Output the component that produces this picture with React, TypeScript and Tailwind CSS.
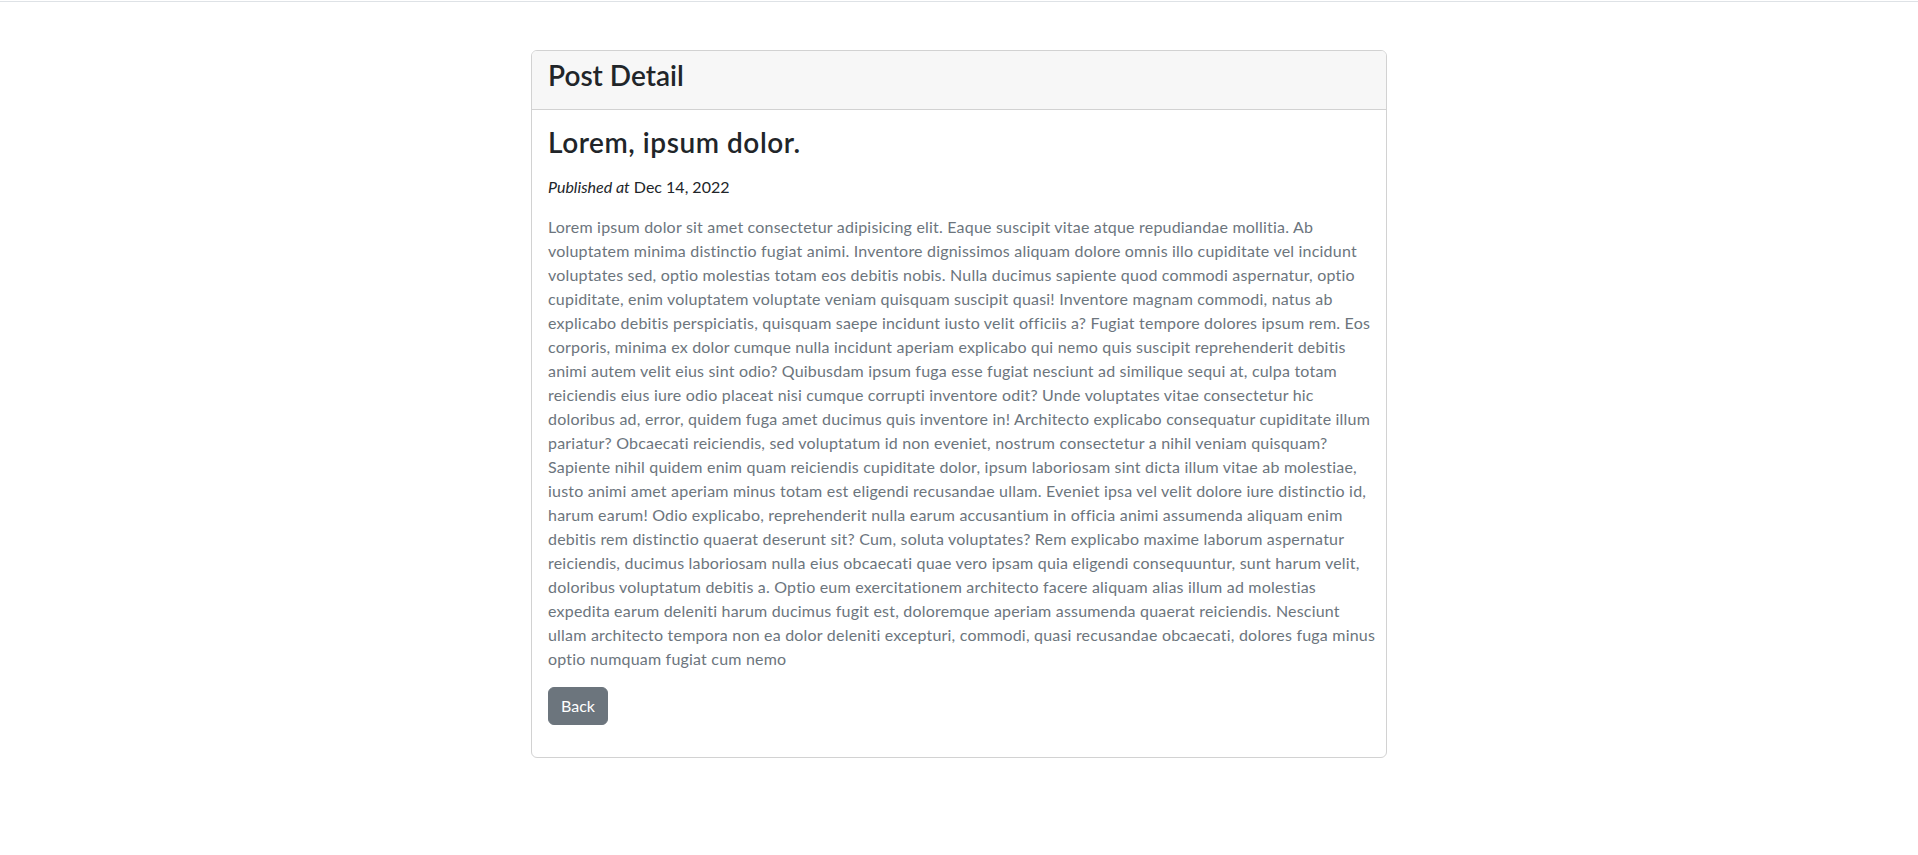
const lines = [
  'Lorem ipsum dolor sit amet consectetur adipisicing elit. Eaque suscipit vitae atque repudiandae mollitia. Ab',
  'voluptatem minima distinctio fugiat animi. Inventore dignissimos aliquam dolore omnis illo cupiditate vel incidunt',
  'voluptates sed, optio molestias totam eos debitis nobis. Nulla ducimus sapiente quod commodi aspernatur, optio',
  'cupiditate, enim voluptatem voluptate veniam quisquam suscipit quasi! Inventore magnam commodi, natus ab',
  'explicabo debitis perspiciatis, quisquam saepe incidunt iusto velit officiis a? Fugiat tempore dolores ipsum rem. Eos',
  'corporis, minima ex dolor cumque nulla incidunt aperiam explicabo qui nemo quis suscipit reprehenderit debitis',
  'animi autem velit eius sint odio? Quibusdam ipsum fuga esse fugiat nesciunt ad similique sequi at, culpa totam',
  'reiciendis eius iure odio placeat nisi cumque corrupti inventore odit? Unde voluptates vitae consectetur hic',
  'doloribus ad, error, quidem fuga amet ducimus quis inventore in! Architecto explicabo consequatur cupiditate illum',
  'pariatur? Obcaecati reiciendis, sed voluptatum id non eveniet, nostrum consectetur a nihil veniam quisquam?',
  'Sapiente nihil quidem enim quam reiciendis cupiditate dolor, ipsum laboriosam sint dicta illum vitae ab molestiae,',
  'iusto animi amet aperiam minus totam est eligendi recusandae ullam. Eveniet ipsa vel velit dolore iure distinctio id,',
  'harum earum! Odio explicabo, reprehenderit nulla earum accusantium in officia animi assumenda aliquam enim',
  'debitis rem distinctio quaerat deserunt sit? Cum, soluta voluptates? Rem explicabo maxime laborum aspernatur',
  'reiciendis, ducimus laboriosam nulla eius obcaecati quae vero ipsam quia eligendi consequuntur, sunt harum velit,',
  'doloribus voluptatum debitis a. Optio eum exercitationem architecto facere aliquam alias illum ad molestias',
  'expedita earum deleniti harum ducimus fugit est, doloremque aperiam assumenda quaerat reiciendis. Nesciunt',
  'ullam architecto tempora non ea dolor deleniti excepturi, commodi, quasi recusandae obcaecati, dolores fuga minus',
  'optio numquam fugiat cum nemo',
];

export default function App() {
  return (
    <div className="min-h-screen bg-white font-['Lato',sans-serif] text-[#212529] text-base leading-6">
      <div className="h-px mt-px bg-[#dee2e6]" />
      <div className="mt-12 w-[856px] mx-auto border border-[#d2d2d2] rounded-md overflow-hidden">
        <div className="bg-[#f7f7f7] border-b border-[#d2d2d2] px-4 pt-2 pb-2">
          <h3 className="text-[28px] leading-[1.2] font-semibold mb-2">Post Detail</h3>
        </div>
        <div className="p-4">
          <h2 className="text-[28px] leading-[1.2] font-semibold tracking-[0.55px] mb-4">Lorem, ipsum dolor.</h2>
          <p className="mb-4">
            <em>Published at</em> Dec 14, 2022
          </p>
          <p className="mb-4 text-[#6c757d] tracking-[0.2px]">
            {lines.map((l) => (
              <span key={l} className="block whitespace-nowrap">
                {l}
              </span>
            ))}
          </p>
          <div className="mb-4">
            <button className="bg-[#6c757d] text-white border border-[#6c757d] rounded-md px-3 py-1.5 leading-6">
              Back
            </button>
          </div>
        </div>
      </div>
    </div>
  );
}
